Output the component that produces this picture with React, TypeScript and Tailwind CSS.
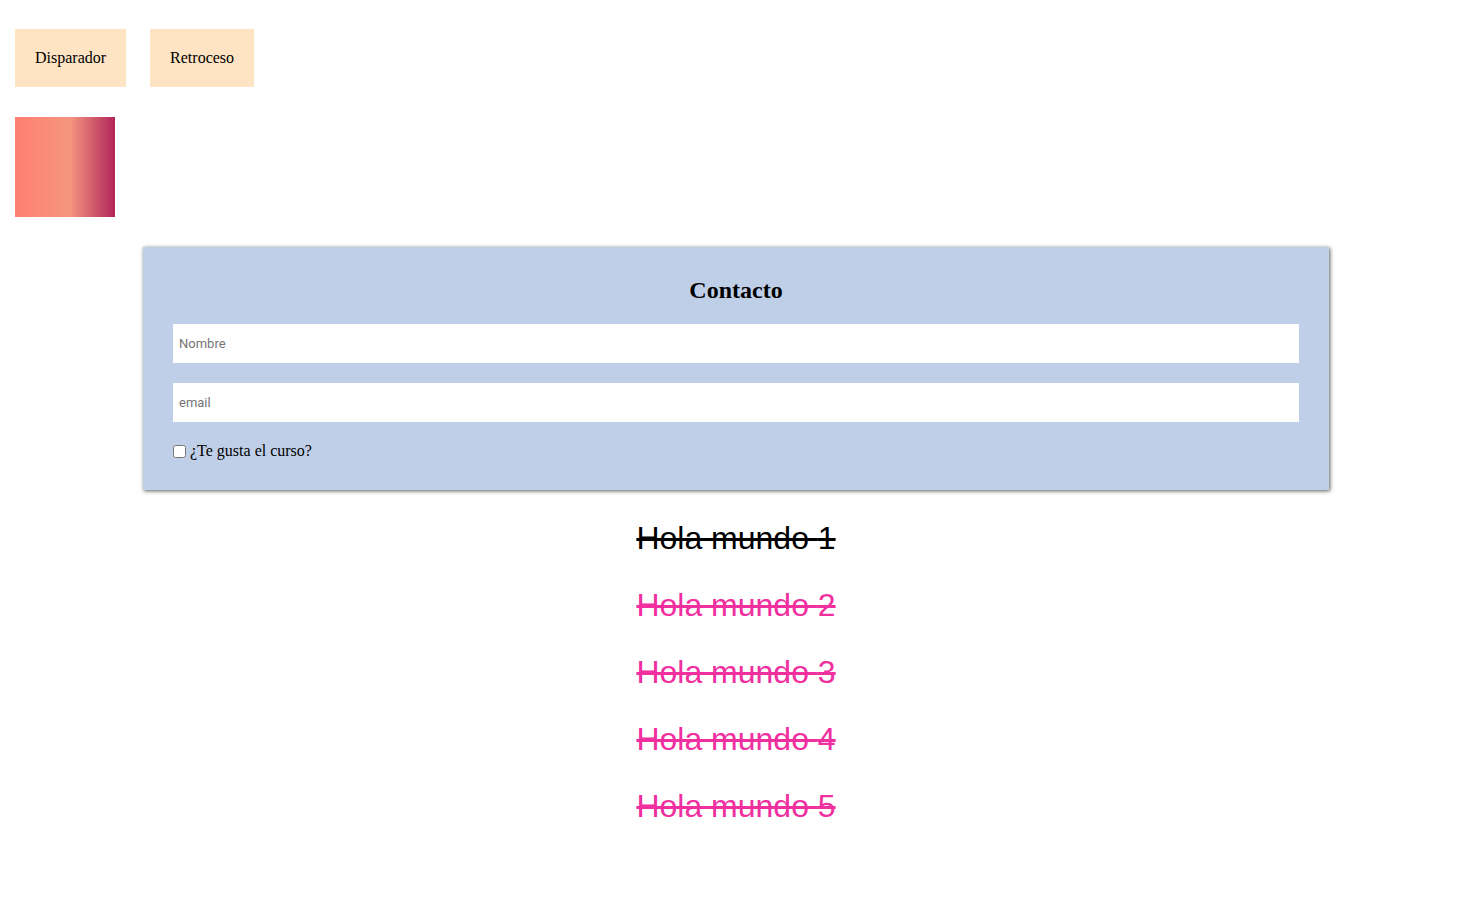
const SERIF = "font-['Liberation_Serif','Times_New_Roman',serif]";

const ITEMS = [1, 2, 3, 4, 5];

export default function App() {
  return (
    <div className="min-h-screen bg-white pb-[60px]">
      <div className="flex gap-[24px] pl-[15px] pt-[29px]">
        <button
          type="button"
          className={`bg-[#ffe4c4] px-[20px] py-[20px] text-[16px] leading-[18px] text-black ${SERIF}`}
        >
          Disparador
        </button>
        <button
          type="button"
          className={`bg-[#ffe4c4] px-[20px] py-[20px] text-[16px] leading-[18px] text-black ${SERIF}`}
        >
          Retroceso
        </button>
      </div>

      <div className="ml-[15px] mt-[30px] h-[100px] w-[100px] bg-[linear-gradient(to_right,#ff7f72_0%,#f5957f_55%,#b1255a_100%)]" />

      <div className="pl-[8px]">
        <form className="mx-auto mt-[30px] w-[1186px] bg-[#bfcfe7] px-[30px] pb-[30px] pt-[30px] shadow-[1px_1px_4px_rgba(0,0,0,0.65)]">
          <h2 className={`text-center text-[24px] font-bold leading-[27px] text-black ${SERIF}`}>
            Contacto
          </h2>
          <input
            type="text"
            placeholder="Nombre"
            className="mt-[20px] block h-[39px] w-full bg-white px-[6px] font-['Roboto','Liberation_Sans',sans-serif] text-[13px] outline-none placeholder:text-[#757575]"
          />
          <input
            type="email"
            placeholder="email"
            className="mt-[20px] block h-[39px] w-full bg-white px-[6px] font-['Roboto','Liberation_Sans',sans-serif] text-[13px] outline-none placeholder:text-[#757575]"
          />
          <label className={`mt-[20px] flex items-center text-[16px] leading-[18px] text-black ${SERIF}`}>
            <input type="checkbox" className="m-0 mr-[4px] h-[13px] w-[13px]" />
            ¿Te gusta el curso?
          </label>
        </form>

        <div className="mt-[30px] flex flex-col items-center gap-[30px]">
          {ITEMS.map((n) => (
            <p
              key={n}
              className={`font-['Liberation_Sans',Arial,sans-serif] text-[32px] leading-[37px] line-through ${
                n === 1 ? "text-black" : "text-[#f0309f]"
              }`}
            >
              Hola mundo {n}
            </p>
          ))}
        </div>
      </div>
    </div>
  );
}
